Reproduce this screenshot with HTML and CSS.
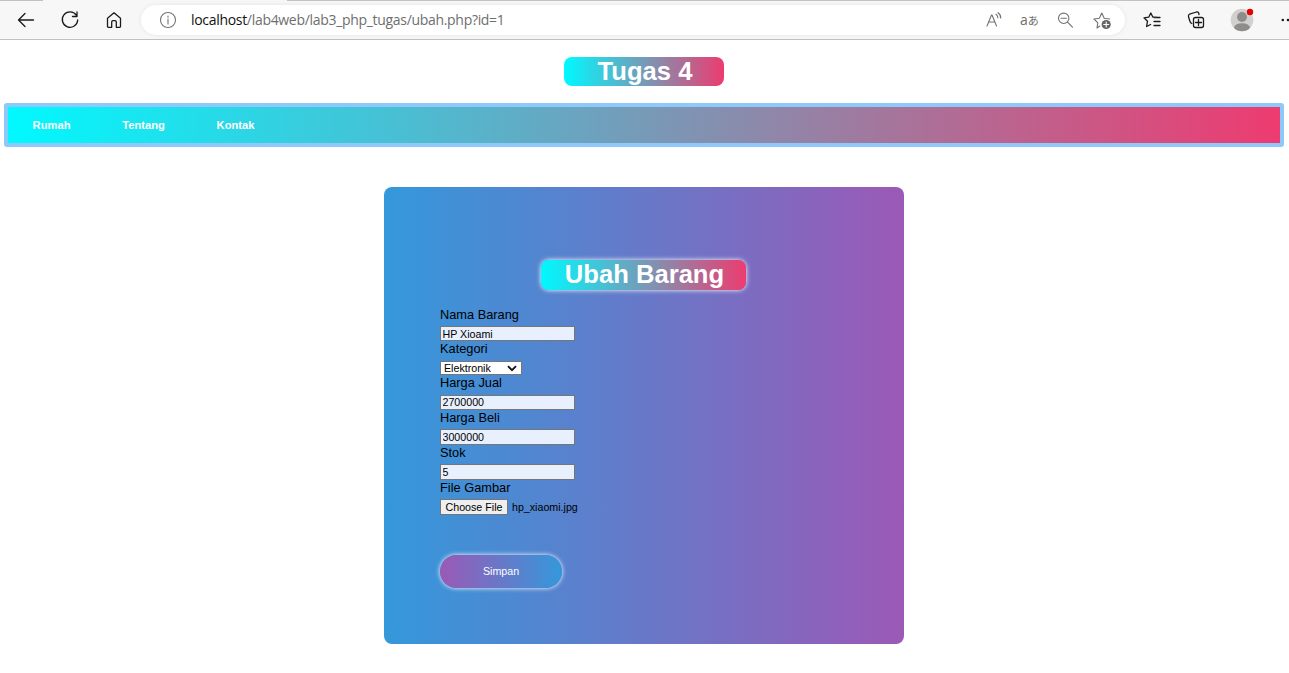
FILE: index.html
```html
<!DOCTYPE html>
<html lang="id">
<head>
<meta charset="utf-8">
<title>Ubah Barang</title>
<link rel="stylesheet" href="styles.css">
</head>
<body>
<div class="toolbar">
  <div class="nav-icons">
    <svg class="icon" viewBox="0 0 20 20"><path d="M17.500 10H2.500M9 3.500 2.500 10l6.500 6.500"/></svg>
    <svg class="icon" viewBox="0 0 20 20"><path d="M16.300 5.200A7.700 7.700 0 1 0 17.700 10M17 2v4.500h-4.500"/></svg>
    <svg class="icon" viewBox="0 0 20 20"><path d="M3.500 8.200 10 2.800l6.500 5.400v8.300q0 .8-.8.800h-3.400V12q0-1.300-1.300-1.300H9q-1.300 0-1.300 1.300v5.300H4.300q-.8 0-.8-.8z"/></svg>
  </div>
  <div class="address">
    <svg class="icon muted info" viewBox="0 0 20 20"><circle cx="10" cy="10" r="7.500"/><path d="M10 9v5M10 6v1.300"/></svg>
    <span class="url"><b>localhost</b>/lab4web/lab3_php_tugas/ubah.php?id=1</span>
    <div class="tools">
      <svg class="icon muted" viewBox="0 0 20 20"><path d="M3 16 7.500 5h.5l4.500 11M4.700 12h6.200M12 4.200q1.800 1.300 1.800 3.600M14 2.700q3 2 2.700 5.300"/></svg>
      <span class="translate">a<span class="kana">あ</span></span>
      <svg class="icon muted" viewBox="0 0 20 20"><circle cx="7.700" cy="8.300" r="5.200"/><path d="M5 8.300h5.400M11.500 12.100l5 5"/></svg>
      <svg class="icon muted" viewBox="0 0 20 20"><path d="M7.800 16 5 18l.8-5.200L2 9l5.300-.8L9.800 3l2.400 5.200 5.500.8"/><circle class="plus-disc" cx="14.200" cy="14.500" r="4.600"/><path class="plus" d="M14.200 12v5M11.700 14.500h5"/></svg>
    </div>
  </div>
  <div class="actions">
    <svg class="icon" viewBox="0 0 20 20"><path d="M15.500 7.300 10.800 7 8.800 3 6.700 7.200 2 7.800l3.500 3.400L4.600 16.500l4-2M12 7.500h6M12 11.500h6M12 15.500h6"/></svg>
    <svg class="icon" viewBox="0 0 20 20"><path d="M5.800 13.500Q4.500 13 4 11.500L2.500 6.800Q2 5 3.500 4.200L10.500 2Q12 1.700 12.700 3L13 4.500"/><rect x="7.500" y="7.500" width="10" height="10" rx="2"/><path d="M12.500 9.500v6M9.500 12.500h6"/></svg>
    <svg class="avatar" viewBox="0 0 24 24"><defs><clipPath id="disc"><circle cx="12" cy="12" r="11.300"/></clipPath></defs><circle cx="12" cy="12" r="11.300" fill="#d2d0ce"/><g clip-path="url(#disc)" fill="#8f8d8b"><circle cx="12" cy="9" r="5"/><ellipse cx="12" cy="20" rx="8" ry="4.800"/></g><circle cx="20" cy="4" r="3.200" fill="#e80000"/></svg>
    <svg class="more" viewBox="0 0 12 20"><circle cx="1.800" cy="10" r="1.300"/><circle cx="7" cy="10" r="1.300"/></svg>
  </div>
</div>

<main>
  <h1 class="banner">Tugas 4</h1>
  <nav class="menu">
    <a>Rumah</a><a>Tentang</a><a>Kontak</a>
  </nav>
  <form class="card">
    <h2 class="banner glow">Ubah Barang</h2>
    <div class="row short"><label>Nama Barang</label><input class="slim" type="text" value="HP Xioami"></div>
    <div class="row short"><label>Kategori</label><div class="select">Elektronik<svg viewBox="0 0 10 7"><path d="M1 1.200 5 5.200l4-4"/></svg></div></div>
    <div class="row"><label>Harga Jual</label><input class="slim low" type="text" value="2700000"></div>
    <div class="row"><label>Harga Beli</label><input type="text" value="3000000"></div>
    <div class="row"><label>Stok</label><input type="text" value="5"></div>
    <div class="row"><label>File Gambar</label><div class="file"><span class="choose">Choose File</span>hp_xiaomi.jpg</div></div>
    <button class="submit" type="button">Simpan</button>
  </form>
</main>
</body>
</html>
```
FILE: styles.css
```css
* { box-sizing: border-box; }
body {
  margin: 0;
  height: 673px;
  overflow: hidden;
  background: #fff;
  font-family: "Liberation Sans", Arial, sans-serif;
}

/* Browser toolbar */
.toolbar {
  display: flex;
  align-items: center;
  height: 40px;
  overflow: hidden;
  background:
    linear-gradient(90deg, #c2c2c2 43px, #f7f7f7 43px 287px, #c2c2c2 287px) top / 100% 1px no-repeat,
    #f7f7f7;
  border-bottom: 1px solid #c0c0c0;
}
.nav-icons { display: flex; flex: none; gap: 24px; width: 141px; padding-left: 16px; }
.icon {
  flex: none;
  width: 20px;
  height: 20px;
  fill: none;
  stroke: #1b1b1b;
  stroke-width: 1.3;
  stroke-linecap: round;
  stroke-linejoin: round;
}
.muted { stroke: #737373; stroke-width: 1.1; }
.address {
  display: flex;
  flex: none;
  align-items: center;
  width: 984px;
  height: 30px;
  padding: 0 13px 0 17px;
  border-radius: 15px;
  background: #fff;
  box-shadow: 0 0 4px rgba(0, 0, 0, .08);
}
.url {
  margin-left: 13px;
  color: #6e6e6e;
  font: 14px/20px "Open Sans", "Noto Sans", sans-serif;
  letter-spacing: -.31px;
  white-space: nowrap;
}
.url b { color: #111; font-weight: 400; }
.tools { display: flex; align-items: center; gap: 16px; margin-left: auto; }
.translate {
  width: 20px;
  color: #6e6e6e;
  font: 14px/20px "Open Sans", sans-serif;
  white-space: nowrap;
}
.kana { font: 11px/1 "Noto Sans CJK JP", sans-serif; }
.plus-disc { fill: #666; stroke: none; }
.plus { stroke: #fff; }
.actions { display: flex; flex: none; align-items: center; padding-left: 17px; gap: 24px; }
.avatar { flex: none; width: 24px; height: 24px; }
.more { flex: none; width: 12px; height: 20px; margin-left: 3px; fill: #1b1b1b; }

/* Page */
main { display: flex; flex-direction: column; align-items: center; padding-top: 17px; }
.banner {
  width: 160px;
  height: 29px;
  margin: 0 1px 0 0;
  padding-left: 2px;
  border-radius: 8px;
  background: linear-gradient(90deg, #00f9ff, #ec3c70);
  color: #fff;
  font-size: 25.6px;
  line-height: 29px;
  text-align: center;
}
.menu {
  display: flex;
  align-items: center;
  align-self: stretch;
  gap: 51.7px;
  height: 44px;
  margin: 17px 5px 0 4px;
  padding-left: 24.6px;
  border: 4px solid #8fc9f9;
  border-radius: 3px;
  background: linear-gradient(90deg, #00f9ff, #ee3b70) padding-box;
  color: #fff;
  font-size: 11.2px;
  font-weight: 700;
}
.card {
  display: flex;
  flex-direction: column;
  width: 520px;
  height: 457px;
  margin: 40px 1px 0 0;
  padding: 73px 56px 56px;
  border-radius: 8px;
  background: linear-gradient(90deg, #3498db, #9b59b6);
}
.glow {
  align-self: center;
  width: 205px;
  height: 30px;
  margin-bottom: 17px;
  box-shadow: 0 0 5px #fff;
}
.row { height: 35px; font-size: 12.8px; }
.short { height: 34px; }
.row label { display: block; height: 19px; line-height: 15px; }
.row input {
  display: block;
  width: 135px;
  height: 16px;
  padding: 0 1.5px;
  border: 1px solid #767676;
  border-radius: 0;
  background: #e8f0fe;
  color: #000;
  font: 10.67px/14px "Liberation Sans", Arial, sans-serif;
}
.row .slim { height: 15px; }
.row .low { margin-top: 1px; padding-bottom: 1px; line-height: 12px; }
.select {
  display: flex;
  align-items: center;
  justify-content: space-between;
  width: 82px;
  height: 14px;
  margin-top: 1px;
  padding: 0 4px 0 3px;
  border: 1px solid #767676;
  background: #fff;
  font-size: 10.67px;
}
.select svg { width: 10px; height: 7px; fill: none; stroke: #111; stroke-width: 1.8; }
.file { display: flex; align-items: center; gap: 4px; height: 16px; font-size: 10.67px; }
.choose {
  width: 68px;
  height: 16px;
  border: 1px solid #767676;
  background: #efefef;
  line-height: 14px;
  text-align: center;
}
.submit {
  width: 122px;
  height: 33px;
  margin-top: 40px;
  padding: 0 0 2px;
  border: 0;
  border-radius: 17px;
  background: linear-gradient(90deg, #9b59b6, #3498db);
  box-shadow: 0 0 5px #fff;
  color: #fff;
  font: 10.67px "Liberation Sans", Arial, sans-serif;
}
```
